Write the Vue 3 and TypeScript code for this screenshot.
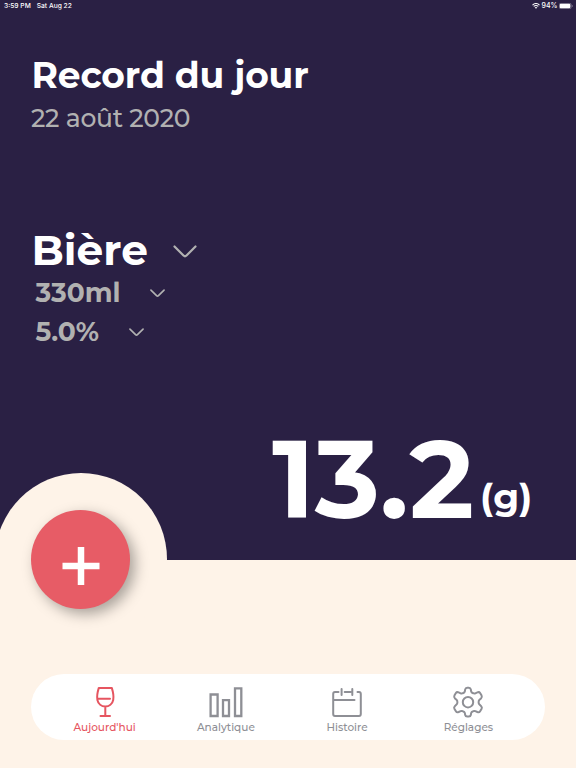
<script setup lang="ts">
import { ref } from 'vue'

type TabId = 'today' | 'stats' | 'history' | 'settings'
interface Tab { id: TabId; label: string }
interface Option { id: string; value: string }

const tabs: Tab[] = [
  { id: 'today', label: "Aujourd'hui" },
  { id: 'stats', label: 'Analytique' },
  { id: 'history', label: 'Histoire' },
  { id: 'settings', label: 'Réglages' },
]
const options: Option[] = [
  { id: 'drink', value: 'Bière' },
  { id: 'volume', value: '330ml' },
  { id: 'strength', value: '5.0%' },
]
const active = ref<TabId>('today')
</script>

<template>
  <main class="screen">
    <section class="hero">
      <div class="status">
        <span class="time">3:59 PM</span>
        <span class="day">Sat Aug 22</span>
        <svg class="wifi" viewBox="0 0 8 6"><path d="M.5 2.1Q4-1 7.5 2.1M1.7 3.4Q4 1.5 6.3 3.4" fill="none" stroke="#fff" stroke-width="1.1" /><path d="M2.7 4.4Q4 3.4 5.3 4.4L4 5.8Z" fill="#fff" /></svg>
        <span class="percent">94%</span>
        <svg class="battery" viewBox="0 0 14 6"><rect x=".25" y=".25" width="12" height="5.5" rx="1.6" fill="none" stroke="#a59fb2" stroke-width=".5" /><rect x=".7" y=".7" width="10.7" height="4.6" rx="1.2" fill="#fff" /><path d="M13 2v2q.7-.3.7-1T13 2" fill="#a59fb2" /></svg>
      </div>
      <header class="heading">
        <h1>Record du jour</h1>
        <p>22 août 2020</p>
      </header>
      <div class="options">
        <button v-for="o in options" :key="o.id" class="option" :class="o.id">
          <span>{{ o.value }}</span>
          <svg viewBox="0 0 24 14"><path d="M1.5 1.5 10.5 10.5Q12 12 13.5 10.5L22.5 1.5" /></svg>
        </button>
      </div>
      <div class="total">
        <span class="amount">13.2</span><span class="unit">(g)</span>
      </div>
      <div class="bump">
        <button class="add" aria-label="Ajouter">
          <svg viewBox="0 0 38 38"><path d="M.5 19H37.5M19 0V38" /></svg>
        </button>
      </div>
    </section>
    <nav class="tabs">
      <button v-for="t in tabs" :key="t.id" class="tab" :class="{ active: active === t.id }" @click="active = t.id">
        <svg viewBox="0 0 36 32">
          <g v-if="t.id === 'today'">
            <path d="M11.8 1.9H24.8C26.4 7 26.8 11 26.2 14C25.4 18 22 20.6 18.3 20.6S11.2 18 10.4 14C9.8 11 10.2 7 11.8 1.9ZM10.6 12.8H23M18.3 20.6V30M13.5 30H23" />
          </g>
          <g v-else-if="t.id === 'stats'" class="bars">
            <path d="M2.6 8.5H9.6V30H2.6ZM15 14.2H21V30H15ZM27 2.3H33.3V30H27Z" />
          </g>
          <g v-else-if="t.id === 'history'" class="calendar">
            <path d="M9.5 6H6Q4.2 6 4.2 8V28Q4.2 30 6 30H30Q31.8 30 31.8 28V8Q31.8 6 30 6H28.5M15.7 6H21.5M12.6 3V9M23.3 3V9M4.2 14H25.5" />
          </g>
          <g v-else class="gear">
            <path d="M17.2 1.7H18.8Q20.5 1.7 20.8 3.4L21.2 5.5Q21.4 6.5 23.2 7.2Q24.4 7.8 25.3 7.3L27.4 6.4Q29.2 5.6 30.1 7.1L31.6 9.6Q32.4 11.1 31 12.4L29.5 13.7Q28.6 14.5 28.6 16.2Q28.6 17.8 29.5 18.6L31 19.9Q32.4 21.2 31.6 22.7L30.1 25.2Q29.2 26.7 27.4 26L25.3 25.1Q24.4 24.7 23.2 25.2Q21.4 25.9 21.2 26.9L20.8 29Q20.5 30.6 18.8 30.6H17.2Q15.5 30.6 15.2 29L14.8 26.9Q14.6 25.9 12.8 25.2Q11.6 24.7 10.7 25.1L8.6 26Q6.8 26.7 5.9 25.2L4.4 22.7Q3.6 21.2 5 19.9L6.5 18.6Q7.4 17.8 7.4 16.2Q7.4 14.5 6.5 13.7L5 12.4Q3.6 11.1 4.4 9.6L5.9 7.1Q6.8 5.6 8.6 6.4L10.7 7.3Q11.6 7.8 12.8 7.2Q14.6 6.5 14.8 5.5L15.2 3.4Q15.5 1.7 17.2 1.7Z" />
            <circle cx="18" cy="16.2" r="5.2" />
          </g>
        </svg>
        <span>{{ t.label }}</span>
      </button>
    </nav>
  </main>
</template>

<style>
body { margin: 0; overflow: hidden; }
</style>

<style scoped>
* { box-sizing: border-box; }
.screen { width: 576px; height: 768px; background: #fef3e8; font-family: Montserrat, Inter, "Open Sans", sans-serif; display: flex; flex-direction: column; align-items: center; overflow: hidden; }
button { border: 0; background: none; padding: 0; font: inherit; color: inherit; }
span { white-space: nowrap; }
.hero { position: relative; width: 576px; height: 559.5px; background: #2a2044; color: #fff; flex: none; }
.status { display: flex; align-items: center; height: 12px; padding: 0 3px 0 4px; font: 500 6.7px/12px Inter, sans-serif; }
.day { margin-left: 6px; }
.wifi { width: 8px; height: 6px; margin-left: auto; }
.percent { margin: 0 1.5px; font-size: 7px; }
.battery { width: 14px; height: 6px; }
.heading { padding: 42px 0 0 31px; }
h1 { margin: 0; padding-left: .5px; font-size: 36px; line-height: 42px; font-weight: 700; letter-spacing: -.12px; }
p { margin: 0; padding-top: 6px; font-size: 25px; line-height: 32px; font-weight: 500; color: #b1b1b1; letter-spacing: -.25px; }
.options { padding: 92px 0 0 31.5px; display: flex; flex-direction: column; align-items: flex-start; }
.option { display: flex; align-items: center; height: 39px; color: #b1b1b1; font-size: 26.5px; font-weight: 700; padding-left: 4px; }
.option span { width: 84px; text-align: left; }
.option svg { width: 15px; height: 9px; margin-left: 30.5px; margin-top: 2px; fill: none; stroke: #b1b1b1; stroke-width: 2.6; stroke-linecap: round; }
.option.drink { height: 47px; color: #fff; font-size: 42.3px; padding-left: 0; }
.option.drink span { width: 115px; }
.option.drink svg { width: 24px; height: 14px; margin-left: 26.5px; margin-top: 5px; stroke-width: 2.2; }
.option.strength span { width: 63px; }
.total { display: flex; align-items: baseline; padding-left: 272px; margin-top: 66px; height: 124px; line-height: 124px; font-weight: 700; }
.amount { width: 208px; font-size: 110px; letter-spacing: -.3px; }
.unit { position: relative; top: -8.5px; font-size: 37px; }
.bump { position: absolute; left: -5px; top: 473px; width: 172px; height: 172px; border-radius: 50%; background: #fef3e8; display: grid; place-items: center; }
.add { width: 99px; height: 99px; border-radius: 50%; background: #e75c66; box-shadow: 5px 5px 14px rgba(0, 0, 0, .34); display: grid; place-items: center; padding-top: 12px; margin-top: 1px; margin-right: 1px; }
.add svg { width: 38px; height: 38px; stroke: #fff; stroke-width: 6.5; display: block; }
.tabs { margin-top: 114.5px; width: 514px; height: 66px; border-radius: 33px; background: #fff; padding: 12px 16px 0 13px; display: grid; grid-template-columns: repeat(4, 1fr); flex: none; }
.tab { display: flex; flex-direction: column; align-items: center; color: #8e8f95; font-size: 10.5px; font-weight: 500; line-height: 14px; }
.tab.active { color: #e65560; }
.tab svg { width: 36px; height: 32px; fill: none; stroke: currentColor; stroke-width: 2; stroke-linecap: round; stroke-linejoin: round; margin-bottom: 3px; flex: none; }
.bars { stroke-width: 2.3; stroke-linejoin: miter; }
</style>
